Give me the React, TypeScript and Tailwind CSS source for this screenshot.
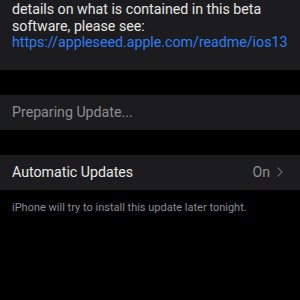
function App() {
    return (
        <div className="w-[300px] h-[300px] bg-black overflow-hidden font-['Roboto',sans-serif]">
            <section className="w-full h-[70px] bg-[#1c1c1e] px-3 pt-[1px] text-[14.2px] leading-[16.5px] text-[#e6e6e6]">
                <p>details on what is contained in this beta</p>
                <p>software, please see:</p>
                <p className="text-[#2f7cf6]">https://appleseed.apple.com/readme/ios13</p>
            </section>

            {/* Preparing .... */}
            <div className="mt-[25px] w-full h-[35px] bg-[#1c1c1e] px-3 flex items-center text-[14.2px] text-[#8d8d92]">
                Preparing Update...
            </div>

            {/* Automatic Updates .... */}
            <div className="mt-[25px] w-full h-[35px] bg-[#1c1c1e] pl-3 pr-[17px] flex items-center justify-between text-[14.2px]">
                <span className="text-[#e6e6e6]">Automatic Updates</span>
                <span className="flex items-center gap-[7px] text-[#8d8d92]">
                    On
                    <svg width="6" height="10" viewBox="0 0 6 10" fill="none">
                        <path d="M1 1l4 4-4 4" stroke="#5c5c60" strokeWidth="1.5" strokeLinecap="round" strokeLinejoin="round" />
                    </svg>
                </span>
            </div>
            <p className="px-3 pt-[10px] text-[11px] text-[#8d8d92]">iPhone will try to install this update later tonight.</p>
        </div>
    )
}

export default App
